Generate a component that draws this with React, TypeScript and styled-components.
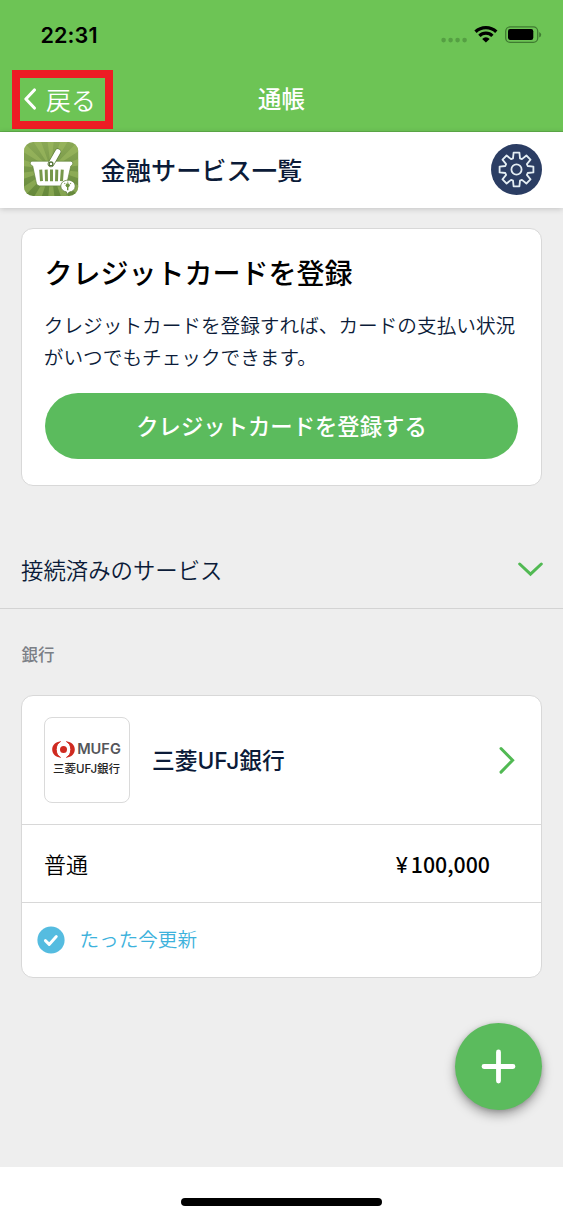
import React from 'react';
import styled, { createGlobalStyle } from 'styled-components';

const GlobalStyle = createGlobalStyle`
  *, *::before, *::after { box-sizing: border-box; }
  body {
    margin: 0;
    font-family: "Noto Sans CJK JP", sans-serif;
    color: #0b1b38;
    background: #fff;
  }
  svg { display: block; flex: none; }
`;

const Screen = styled.div`
  position: relative;
  width: 563px;
  height: 1218px;
  overflow: hidden;
  display: flex;
  flex-direction: column;
`;

const TopArea = styled.header`
  height: 132px;
  flex: none;
  background: #6dc455;
  border-bottom: 1px solid #5fae4a;
`;

const StatusBar = styled.div`
  height: 70px;
  display: flex;
  align-items: center;
  justify-content: space-between;
  padding: 0 21px 0 40.5px;
`;

const Time = styled.span`
  font: 600 21.6px/26px Inter, sans-serif;
  letter-spacing: 0.1px;
  color: #000;
`;

const NavBar = styled.div`
  height: 59px;
  display: grid;
  grid-template-columns: 1fr auto 1fr;
  align-items: center;
`;

const BackButton = styled.button`
  justify-self: start;
  display: flex;
  align-items: center;
  gap: 10px;
  width: 101px;
  height: 59px;
  margin-left: 12px;
  padding: 0 0 2px 4px;
  border: 8px solid #ed1c24;
  background: none;
  color: #fff;
  font: 350 24.9px/30px "Noto Sans CJK JP", sans-serif;
  white-space: nowrap;
`;

const NavTitle = styled.h1`
  margin: 0;
  padding-bottom: 3px;
  color: #fff;
  font-size: 23.4px;
  line-height: 30px;
  font-weight: 500;
`;

const ServiceHeader = styled.div`
  position: relative;
  z-index: 1;
  height: 75.5px;
  flex: none;
  display: flex;
  align-items: center;
  padding: 0 21px 1px 24px;
  background: #fff;
  box-shadow: 0 1px 6px rgba(0, 0, 0, 0.18);
`;

const ServiceTitle = styled.h2`
  flex: 1;
  margin: 0 0 1px 21.6px;
  font-size: 25.2px;
  line-height: 36px;
  font-weight: 500;
`;

const Content = styled.main`
  height: 959.5px;
  flex: none;
  background: #eee;
  padding-top: 20.5px;
`;

const Card = styled.section`
  width: 521px;
  margin-left: 21px;
  border: 1.5px solid #d8d8d8;
  border-radius: 12px;
  background: #fff;
`;

const PromoCard = styled(Card)`
  height: 258px;
  padding: 23px 23px 0;
`;

const PromoTitle = styled.h3`
  margin: 0 0 0 -0.5px;
  color: #000;
  font-size: 28px;
  line-height: 40px;
  font-weight: 500;
`;

const PromoText = styled.p`
  margin: 17px -4px 0 -1.2px;
  font-size: 19.65px;
  line-height: 31.5px;
  font-weight: 350;
  white-space: nowrap;
`;

const PromoButton = styled.button`
  display: block;
  width: 473px;
  height: 66px;
  margin-top: 21px;
  padding: 0 0 3px;
  border: 0;
  border-radius: 33px;
  background: #5bbb5d;
  color: #fff;
  font: 500 22.35px/32px "Noto Sans CJK JP", sans-serif;
`;

const SectionToggle = styled.div`
  height: 78px;
  margin-top: 45px;
  display: flex;
  align-items: center;
  justify-content: space-between;
  padding: 0 20.5px 2px 21px;
  border-bottom: 1px solid #d3d3d3;
  font-size: 22.4px;
  line-height: 32px;
  font-weight: 350;
`;

const GroupLabel = styled.h4`
  margin: 33px 0 29px 21.4px;
  color: #7b7f86;
  font-size: 16.5px;
  line-height: 24px;
  font-weight: 500;
`;

const BankCard = styled(Card)`
  height: 282.5px;
`;

const BankRow = styled.div`
  height: 129px;
  display: flex;
  align-items: center;
  padding: 0 26.5px 0 21.5px;
  border-bottom: 1.5px solid #d8d8d8;
`;

const BankLogo = styled.div`
  width: 86px;
  height: 86px;
  border: 1.5px solid #dadada;
  border-radius: 8px;
  display: flex;
  flex-direction: column;
  align-items: center;
  padding-top: 19px;
  color: #222;
`;

const LogoMark = styled.div`
  display: flex;
  align-items: center;
  gap: 2px;
  height: 24px;
  font: 600 14.6px/24px Inter, sans-serif;
  color: #55565a;
`;

const LogoName = styled.span`
  font: 500 11.5px/15px "Noto Sans CJK JP", sans-serif;
  white-space: nowrap;
`;

const Latin = styled.span`
  font-family: Inter, sans-serif;
`;

const BankName = styled.span`
  flex: 1;
  margin: 0 0 0 22.5px;
  font-size: 22.75px;
  line-height: 32px;
  font-weight: 500;
`;

const AccountRow = styled.div`
  height: 78px;
  display: flex;
  align-items: center;
  justify-content: space-between;
  padding: 0 51px 2px 22px;
  border-bottom: 1.5px solid #d8d8d8;
  color: #000;
  font-size: 22px;
  line-height: 32px;
  font-weight: 350;
`;

const Amount = styled.span`
  display: flex;
  align-items: baseline;
  padding-top: 4px;
  font-size: 21.3px;
  font-weight: 500;
`;

const Yen = styled.span`
  width: 15px;
  font: 400 22px/32px Inter, sans-serif;
`;

const UpdateRow = styled.div`
  height: 73px;
  display: flex;
  align-items: center;
  gap: 14.5px;
  padding-left: 15px;
  color: #3db2dc;
  font-size: 19.6px;
  line-height: 28px;
  font-weight: 350;
`;

const UpdateText = styled.span`
  padding-bottom: 2px;
`;

const AddButton = styled.button`
  position: absolute;
  left: 455px;
  top: 1023px;
  width: 87px;
  height: 87px;
  padding: 0;
  border: 0;
  border-radius: 50%;
  background: #5bbb5d;
  display: grid;
  place-items: center;
  box-shadow: 0 5px 11px rgba(0, 0, 0, 0.34), 0 1px 4px rgba(0, 0, 0, 0.15);
`;

const HomeArea = styled.footer`
  flex: 1;
  display: flex;
  justify-content: center;
  align-items: flex-end;
  padding-bottom: 12px;
  background: #fff;
`;

const HomeIndicator = styled.div`
  width: 201px;
  height: 8px;
  border-radius: 4px;
  background: #000;
`;

const StatusIcons = () => (
  <svg width="104" height="24" viewBox="0 0 104 24">
    <g fill="#559f43">
      <circle cx="5.6" cy="17.1" r="2.3" />
      <circle cx="12.6" cy="17.1" r="2.3" />
      <circle cx="19.6" cy="17.1" r="2.3" />
      <circle cx="26.6" cy="17.1" r="2.3" />
    </g>
    <g fill="none" stroke="#000" strokeWidth="3.3">
      <path d="M37.5 8.8a15 15 0 0 1 20.8 0" />
      <path d="M41.4 12.9a9.2 9.2 0 0 1 13 0" />
    </g>
    <path d="M47.9 19.5 44.2 15.9a5.2 5.2 0 0 1 7.4 0Z" fill="#000" />
    <rect x="67.7" y="3.8" width="32" height="15.6" rx="4.4" fill="none" stroke="#3f7b31" strokeWidth="1.3" />
    <rect x="70" y="6" width="25.3" height="11" rx="2.2" />
    <path d="M101.2 9v5.6q2-.9 2-2.8t-2-2.8Z" fill="#3f7b31" />
  </svg>
);

const BackChevron = () => (
  <svg width="12" height="22" viewBox="0 0 12 22">
    <path d="M10.4 2 1.9 11l8.5 9" fill="none" stroke="#fff" strokeWidth="3.1" strokeLinecap="round" strokeLinejoin="round" />
  </svg>
);

const rays = Array.from({ length: 14 }, (_, i) => {
  const a = (i * Math.PI * 2) / 14 + 0.1;
  const b = a + Math.PI / 14;
  return `M27 27L${27 + 45 * Math.cos(a)} ${27 + 45 * Math.sin(a)}L${27 + 45 * Math.cos(b)} ${27 + 45 * Math.sin(b)}Z`;
}).join('');

const BasketIcon = () => (
  <svg width="55" height="54" viewBox="0 0 55 54">
    <defs>
      <linearGradient id="tile" x1="0" y1="0" x2="0" y2="1">
        <stop offset="0" stopColor="#8aa855" />
        <stop offset="1" stopColor="#65883b" />
      </linearGradient>
      <clipPath id="tileClip"><rect width="54.2" height="54" rx="9" /></clipPath>
    </defs>
    <g clipPath="url(#tileClip)">
      <rect width="55" height="54" fill="url(#tile)" />
      <path d={rays} fill="#a3c063" opacity="0.5" />
      <path d="M8 19.2h38.5q2.3 0 2.3 2t-2 2.8l-3.9 17.2q-.5 2.7-3 2.7H15.4q-2.5 0-3-2.7L8.7 24q-2.5-.7-2.5-2.8 0-2 1.8-2Z" fill="#fff" stroke="#64853e" strokeWidth="0.7" />
      <g stroke="#77984b" strokeWidth="3" strokeLinecap="butt">
        <path d="M16.7 27.6l.8 11.6M22.2 27.6l.3 11.6M27.5 27.6v11.6M32.8 27.6l-.3 11.6M38.3 27.6l-.8 11.6" />
      </g>
      <path d="M27 21.9 33.9 9.8" stroke="#607f3b" strokeWidth="6.6" strokeLinecap="round" />
      <path d="M27 21.9 33.9 9.8" stroke="#fff" strokeWidth="5.2" strokeLinecap="round" />
      <circle cx="27" cy="21.9" r="1.9" fill="#fff" stroke="#55743a" strokeWidth="1.4" />
      <path d="M44 38.2c4.2 0 7.2 2.6 7.2 6s-2.5 5.4-5.9 5.8l-2.5 2.5-.3-2.6c-3.4-.5-5.7-2.7-5.7-5.7 0-3.4 3-6 7.2-6Z" fill="#fff" stroke="#607f3b" strokeWidth="0.8" />
      <circle cx="43.7" cy="43.3" r="2.1" fill="#6d9341" />
      <path d="M43.7 45v3.2M40.5 41.3l.6.5M46.9 41.3l-.6.5M43.7 39.7v.7" stroke="#6d9341" strokeWidth="1.4" />
    </g>
  </svg>
);

const gear = (() => {
  const p: string[] = [];
  for (let i = 0; i < 8; i++) {
    const t = (i * Math.PI) / 4;
    [[-3.5, 11.2], [-2.9, 16.9], [2.9, 16.9], [3.5, 11.2]].forEach(([x, y]) => {
      p.push(`${(x * Math.cos(t) + y * Math.sin(t)).toFixed(2)} ${(y * Math.cos(t) - x * Math.sin(t)).toFixed(2)}`);
    });
  }
  return `M${p.join('L')}Z`;
})();

const GearIcon = () => (
  <svg width="51" height="51" viewBox="-25.5 -25.5 51 51">
    <circle r="25.5" fill="#2b3d63" />
    <g fill="none" stroke="#e3edf3" strokeWidth="1.8" strokeLinejoin="round">
      <path d={gear} />
      <circle r="5.1" />
    </g>
  </svg>
);

const DownChevron = () => (
  <svg width="25" height="16" viewBox="0 0 25 16">
    <path d="M1.7 3 12.5 13.1 23.3 3" fill="none" stroke="#51b953" strokeWidth="3" strokeLinecap="round" />
  </svg>
);

const RightChevron = () => (
  <svg width="16" height="28" viewBox="0 0 16 28">
    <path d="M2 2.5 13.6 14.3 2 26.1" fill="none" stroke="#51b953" strokeWidth="3" strokeLinecap="round" />
  </svg>
);

const MufgMark = () => (
  <svg width="23" height="17" viewBox="0 0 23 17">
    <circle cx="11.5" cy="8.5" r="3.5" fill="#cf2a20" />
    <path d="M8.7.5C3.3.8.2 4.2.2 8.5s3.1 7.7 8.5 8C5.6 15 4.2 12 4.2 8.5S5.6 2 8.7.5Z" fill="#cf2a20" />
    <path d="M14.3.5c5.4.3 8.5 3.7 8.5 8s-3.1 7.7-8.5 8c3.1-1.5 4.5-4.5 4.5-8S17.4 2 14.3.5Z" fill="#cf2a20" />
    <path d="M8.7.5C5.6 2 4.2 5 4.2 8.5s1.4 6.5 4.5 8M14.3.5c3.1 1.5 4.5 4.5 4.5 8s-1.4 6.5-4.5 8" fill="none" stroke="#cf2a20" strokeWidth="1" />
  </svg>
);

const CheckIcon = () => (
  <svg width="28" height="28" viewBox="0 0 28 28">
    <circle cx="14" cy="14" r="13.6" fill="#55bce0" />
    <path d="M8.4 14.6 12.2 18.4 19.3 10.6" fill="none" stroke="#fff" strokeWidth="2.9" strokeLinecap="round" strokeLinejoin="round" />
  </svg>
);

const PlusIcon = () => (
  <svg width="35" height="35" viewBox="0 0 35 35">
    <path d="M17.5 3v29M3 17.5h29" stroke="#fff" strokeWidth="4.8" strokeLinecap="round" />
  </svg>
);

export default function App() {
  return (
    <Screen>
      <GlobalStyle />
      <TopArea>
        <StatusBar>
          <Time>22:31</Time>
          <StatusIcons />
        </StatusBar>
        <NavBar>
          <BackButton><BackChevron />戻る</BackButton>
          <NavTitle>通帳</NavTitle>
        </NavBar>
      </TopArea>
      <ServiceHeader>
        <BasketIcon />
        <ServiceTitle>金融サービス一覧</ServiceTitle>
        <GearIcon />
      </ServiceHeader>
      <Content>
        <PromoCard>
          <PromoTitle>クレジットカードを登録</PromoTitle>
          <PromoText>クレジットカードを登録すれば、カードの支払い状況<br />がいつでもチェックできます。</PromoText>
          <PromoButton>クレジットカードを登録する</PromoButton>
        </PromoCard>
        <SectionToggle>
          <span>接続済みのサービス</span>
          <DownChevron />
        </SectionToggle>
        <GroupLabel>銀行</GroupLabel>
        <BankCard>
          <BankRow>
            <BankLogo>
              <LogoMark><MufgMark />MUFG</LogoMark>
              <LogoName>三菱<Latin>UFJ</Latin>銀行</LogoName>
            </BankLogo>
            <BankName>三菱<Latin>UFJ</Latin>銀行</BankName>
            <RightChevron />
          </BankRow>
          <AccountRow>
            <span>普通</span>
            <Amount><Yen>¥</Yen>100,000</Amount>
          </AccountRow>
          <UpdateRow>
            <CheckIcon />
            <UpdateText>たった今更新</UpdateText>
          </UpdateRow>
        </BankCard>
      </Content>
      <AddButton aria-label="追加"><PlusIcon /></AddButton>
      <HomeArea><HomeIndicator /></HomeArea>
    </Screen>
  );
}
